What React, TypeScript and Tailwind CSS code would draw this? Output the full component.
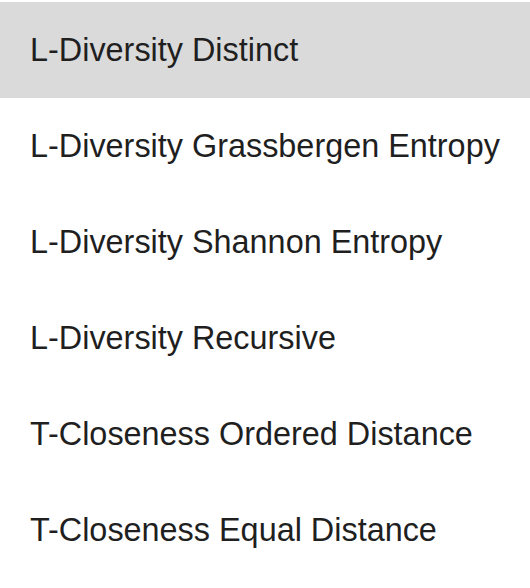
const items = [
  "L-Diversity Distinct",
  "L-Diversity Grassbergen Entropy",
  "L-Diversity Shannon Entropy",
  "L-Diversity Recursive",
  "T-Closeness Ordered Distance",
  "T-Closeness Equal Distance",
];

export default function App() {
  return (
    <div className="min-h-screen bg-white pt-[2px] font-['Liberation_Sans',Arial,sans-serif]">
      <ul>
        {items.map((item, index) => (
          <li
            key={item}
            className={`flex h-24 items-center pl-[30px] text-[32.4px] leading-none text-[#1f1f1f] ${
              index === 0 ? "bg-[#dadada]" : "bg-white"
            }`}
          >
            {item}
          </li>
        ))}
      </ul>
    </div>
  );
}
